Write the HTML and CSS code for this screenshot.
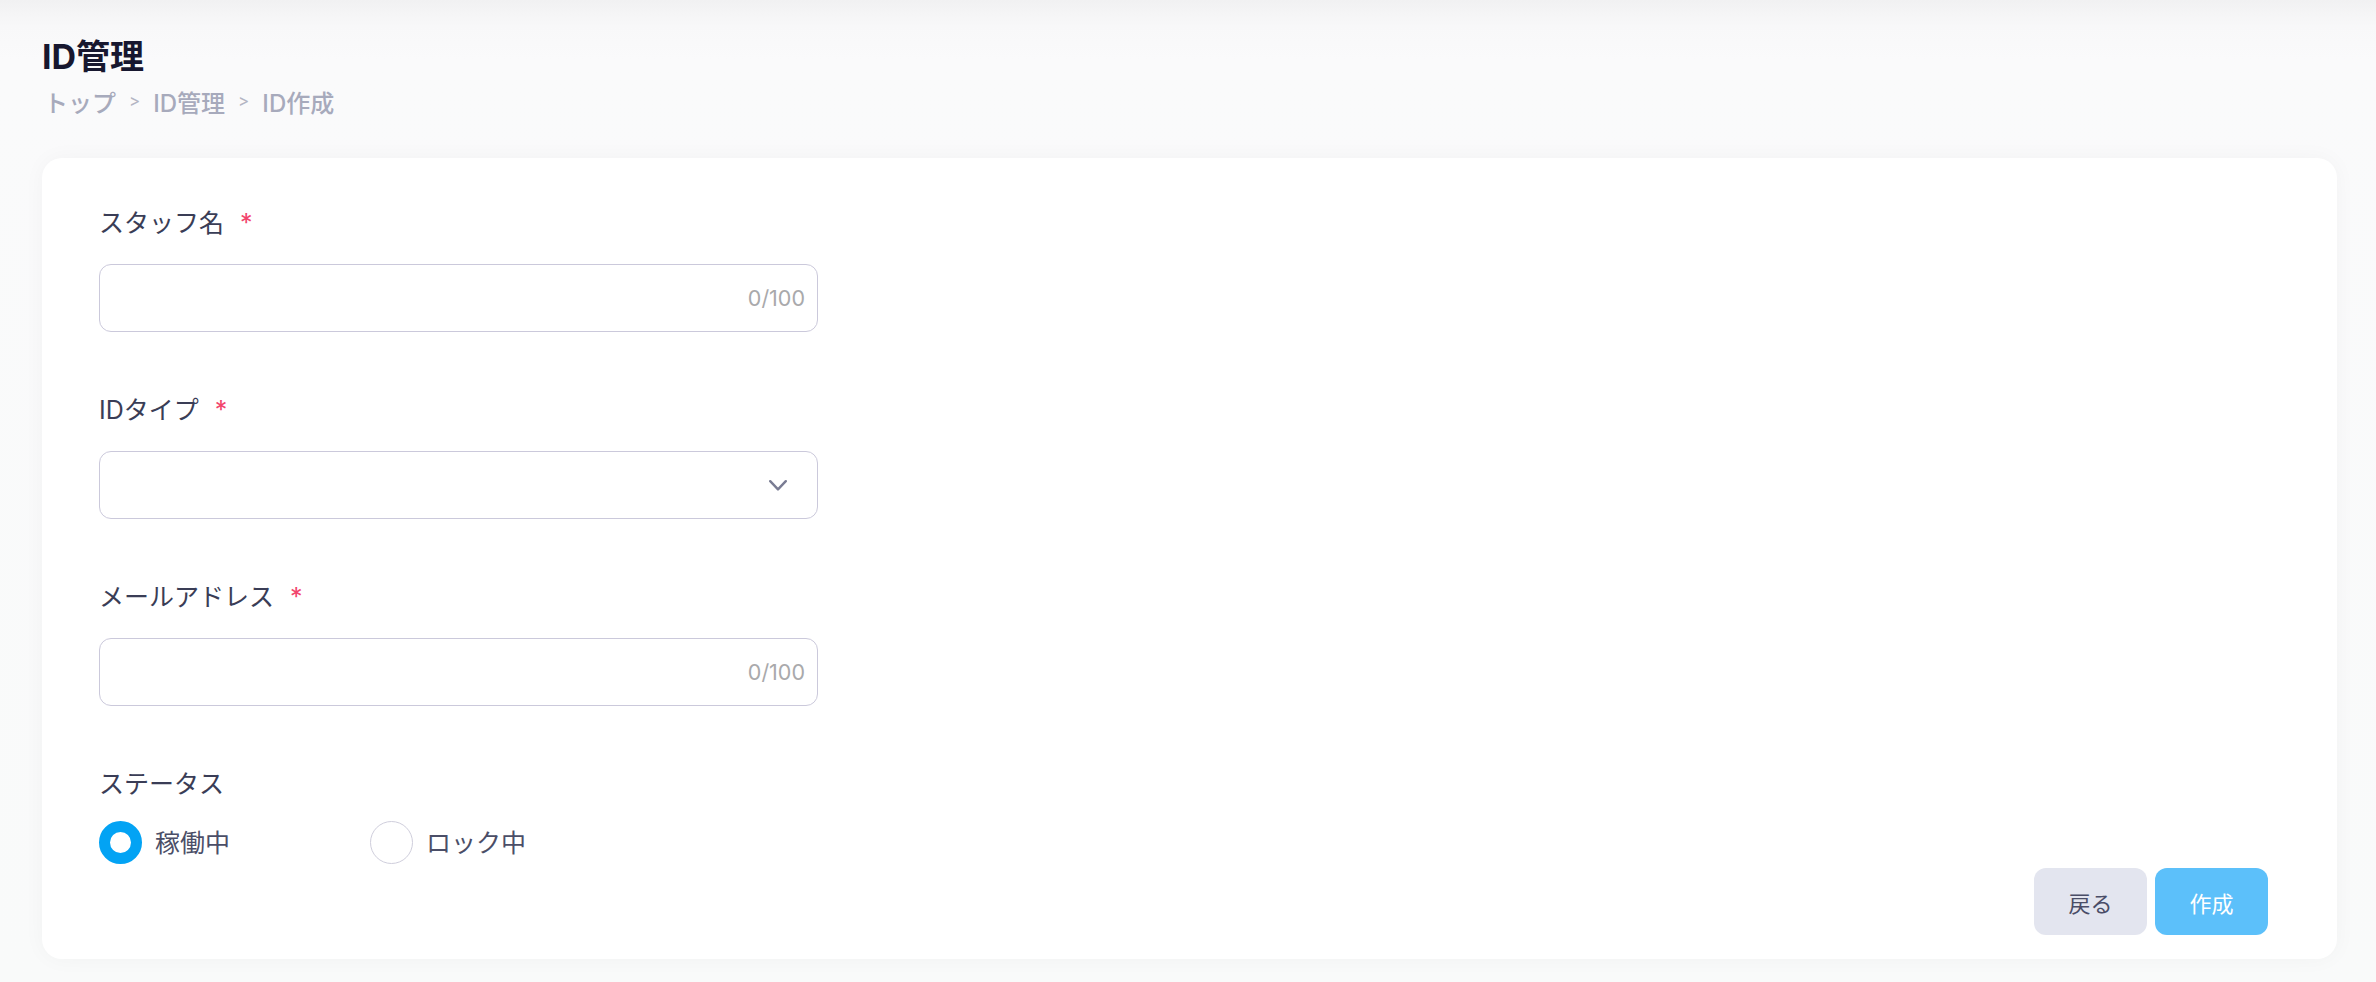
FILE: index.html
```html
<!DOCTYPE html>
<html lang="ja">
<head>
<meta charset="utf-8">
<title>ID作成</title>
<link rel="stylesheet" href="styles.css">
</head>
<body>
<div class="page">
  <header class="page-head">
    <h1 class="title">ID管理</h1>
    <nav class="crumbs">
      <span class="crumb">トップ</span>
      <span class="sep">&gt;</span>
      <span class="crumb">ID管理</span>
      <span class="sep">&gt;</span>
      <span class="crumb">ID作成</span>
    </nav>
  </header>

  <main class="card">
    <form class="form">
      <div class="field">
        <label class="label">スタッフ名<span class="req">*</span></label>
        <div class="box">
          <input class="box-input" type="text">
          <span class="count">0/100</span>
        </div>
      </div>

      <div class="field">
        <label class="label">IDタイプ<span class="req">*</span></label>
        <div class="box select">
          <span class="box-input"></span>
          <svg class="chev" width="18" height="11" viewBox="0 0 18 11"><polyline points="1.2,1.2 9,9.4 16.8,1.2" fill="none" stroke="#797c93" stroke-width="2.4" stroke-linecap="round" stroke-linejoin="round"/></svg>
        </div>
      </div>

      <div class="field">
        <label class="label">メールアドレス<span class="req">*</span></label>
        <div class="box">
          <input class="box-input" type="text">
          <span class="count">0/100</span>
        </div>
      </div>

      <div class="field status">
        <label class="label">ステータス</label>
        <div class="radios">
          <div class="radio-item"><span class="radio checked"></span><span class="radio-text">稼働中</span></div>
          <div class="radio-item"><span class="radio"></span><span class="radio-text">ロック中</span></div>
        </div>
      </div>

      <div class="actions">
        <button type="button" class="btn btn-back">戻る</button>
        <button type="button" class="btn btn-create">作成</button>
      </div>
    </form>
  </main>
</div>
</body>
</html>
```
FILE: styles.css
```css
* { box-sizing: border-box; }

html, body {
  margin: 0;
  padding: 0;
}

body {
  background: linear-gradient(#f1f1f2 0, #f8f8f9 26px, #fafafb 60px, #f9fafa 100%);
  font-family: "Inter", "Noto Sans CJK JP", sans-serif;
  min-height: 982px;
}

.page {
  padding: 35px 39px 0 42px;
}

.page-head {
  display: flex;
  flex-direction: column;
}

.title {
  margin: 0;
  font-size: 34px;
  line-height: 44px;
  font-weight: 700;
  color: #17172f;
}

.crumbs {
  margin-top: 7px;
  display: flex;
  align-items: center;
  height: 30px;
  font-size: 24px;
  font-weight: 500;
  color: #a7aabc;
  padding-left: 2px;
}

.sep {
  font-size: 17px;
  color: #b3b5c4;
  margin: 0 13px;
  font-weight: 400;
}

.card {
  margin-top: 42px;
  background: #ffffff;
  border-radius: 20px;
  box-shadow: 0 0 22px rgba(40, 50, 60, 0.035);
  padding: 47px 69px 24px 57px;
}

.form {
  display: flex;
  flex-direction: column;
}

.field {
  display: flex;
  flex-direction: column;
  margin-bottom: 60px;
}

.field.status {
  margin-bottom: 0;
}

.label {
  font-size: 25px;
  line-height: 36px;
  color: #3a3d56;
  margin-bottom: 23px;
  display: flex;
  align-items: center;
}

.status .label {
  margin-bottom: 19px;
}

.req {
  color: #f2446c;
  margin-left: 16px;
  font-size: 25px;
}

.box {
  width: 719px;
  height: 68px;
  border: 1px solid #cbc9db;
  border-radius: 12px;
  display: flex;
  align-items: center;
  padding: 0 12px 0 16px;
  background: #fff;
}

.box-input {
  flex: 1;
  border: none;
  outline: none;
  background: transparent;
  font: inherit;
  font-size: 22px;
  height: 100%;
  padding: 0;
}

.count {
  font-size: 21.5px;
  color: #a9a9ab;
}

.select {
  padding-right: 30px;
}

.chev {
  display: block;
}

.radios {
  display: flex;
  height: 43px;
}

.radio-item {
  width: 271px;
  display: flex;
  align-items: center;
  gap: 13px;
}

.radio {
  width: 43px;
  height: 43px;
  border-radius: 50%;
  border: 1.5px solid #cfcedc;
  background: #fff;
  flex: none;
}

.radio.checked {
  border: 11px solid #03a3f4;
}

.radio-text {
  font-size: 25px;
  color: #4b4e67;
  line-height: 36px;
}

.actions {
  margin-top: 4px;
  display: flex;
  justify-content: flex-end;
  gap: 8px;
}

.btn {
  width: 113px;
  height: 67px;
  border: none;
  border-radius: 12px;
  font-family: "Inter", "Noto Sans CJK JP", sans-serif;
  font-size: 22px;
  cursor: pointer;
}

.btn-back {
  background: #e3e5ef;
  color: #4a4d67;
}

.btn-create {
  background: #5cc0fa;
  color: #ffffff;
}
```
